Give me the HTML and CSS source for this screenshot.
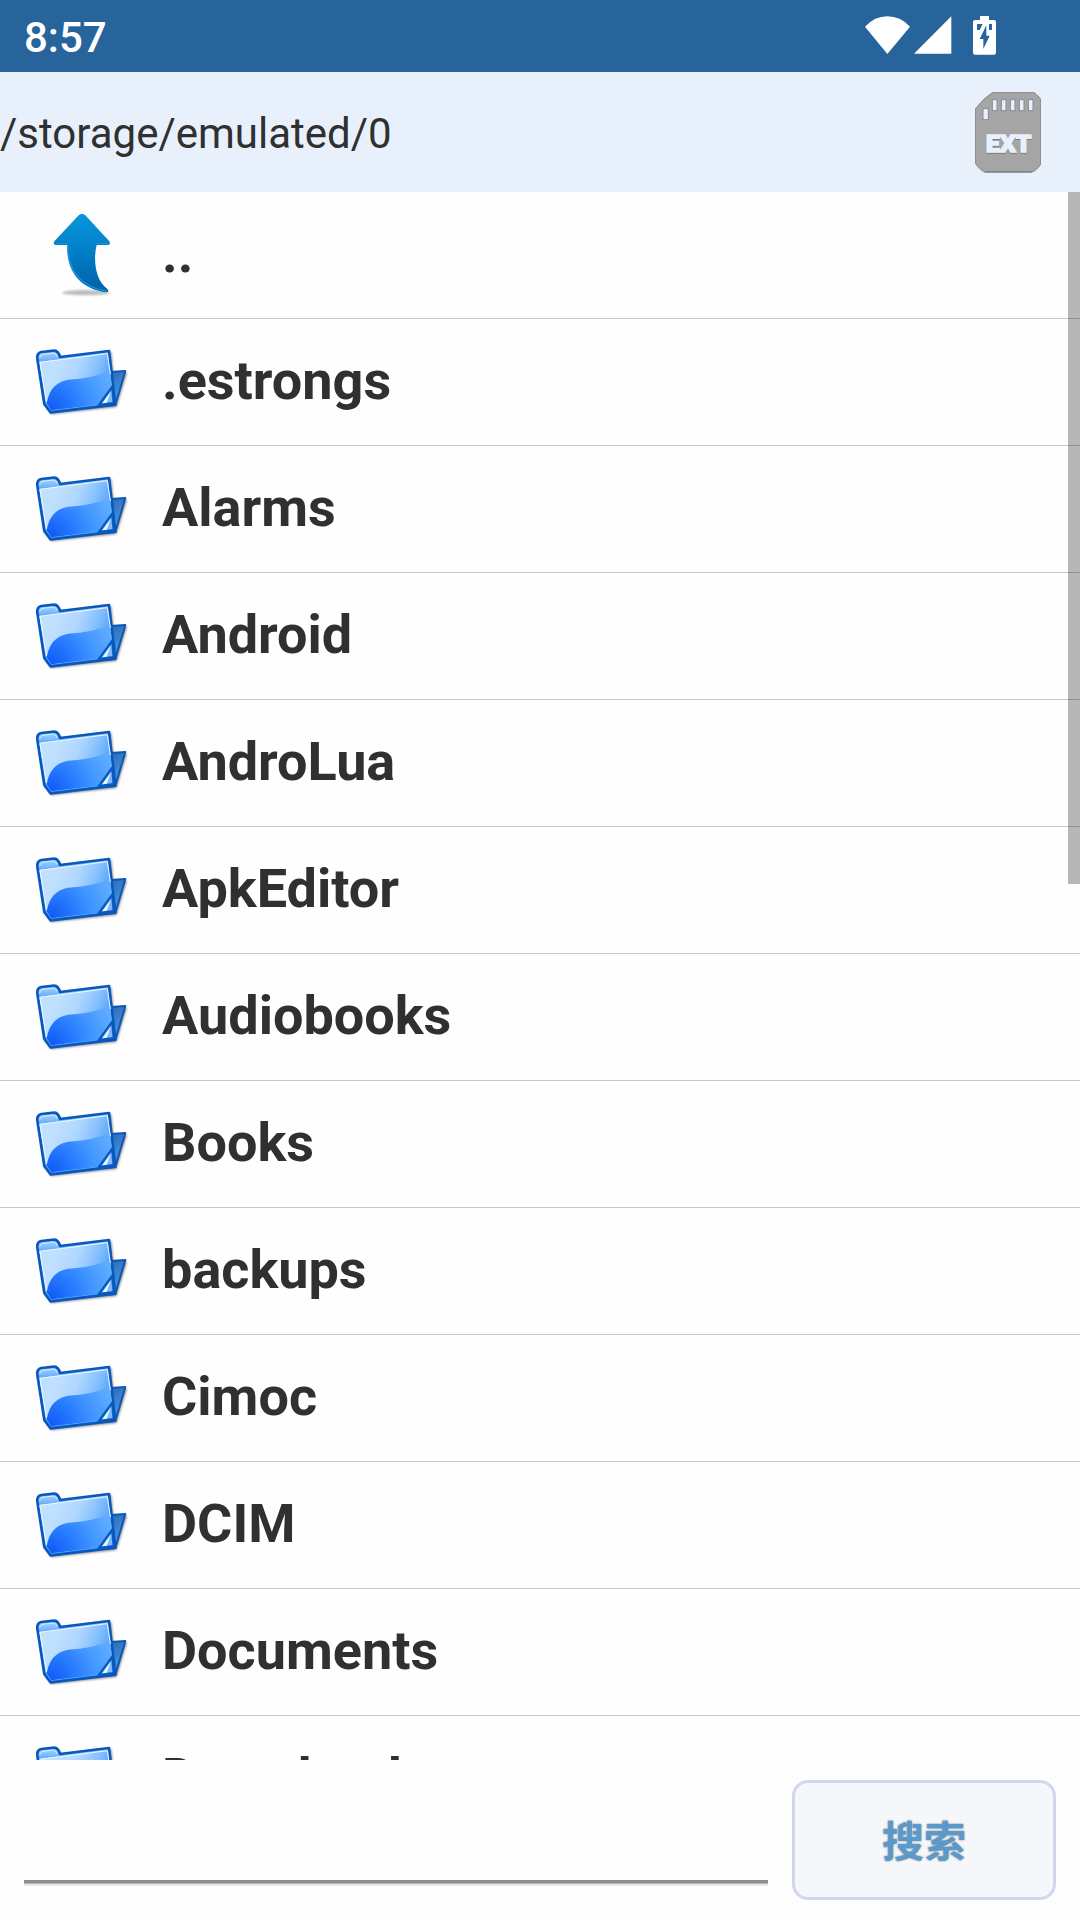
FILE: index.html
```html
<!DOCTYPE html>
<html lang="zh-CN">
<head>
  <meta charset="UTF-8">
  <meta name="viewport" content="width=device-width, initial-scale=1.0">
  <title>/storage/emulated/0</title>
  <link rel="stylesheet" href="styles.css">
</head>
<body>

<!-- shared folder icon -->
<svg class="sprite" aria-hidden="true">
  <defs>
    <linearGradient id="folderShine" gradientUnits="userSpaceOnUse" x1="110" y1="95" x2="262" y2="150">
      <stop offset="0" stop-color="#c0e0ff"/>
      <stop offset="0.4" stop-color="#b0d7ff"/>
      <stop offset="0.75" stop-color="#84bffd"/>
      <stop offset="1" stop-color="#58a5fb"/>
    </linearGradient>
    <radialGradient id="folderWave" gradientUnits="userSpaceOnUse" cx="90" cy="240" r="200">
      <stop offset="0" stop-color="#0d58f5"/>
      <stop offset="0.4" stop-color="#2a7dff"/>
      <stop offset="0.7" stop-color="#4499ff"/>
      <stop offset="1" stop-color="#5fabff"/>
    </radialGradient>
    <linearGradient id="folderBack" x1="0" y1="0" x2="0.6" y2="1">
      <stop offset="0" stop-color="#215fa8"/>
      <stop offset="1" stop-color="#4d9ae8"/>
    </linearGradient>
    <linearGradient id="folderTab" gradientUnits="userSpaceOnUse" x1="0" y1="66" x2="0" y2="100">
      <stop offset="0" stop-color="#a5d0ff"/>
      <stop offset="1" stop-color="#58a6fb"/>
    </linearGradient>
    <filter id="soft" x="-20%" y="-50%" width="140%" height="200%">
      <feGaussianBlur stdDeviation="3"/>
    </filter>
  </defs>
  <symbol id="folder" viewBox="36 12 288 288">
    <path d="M54 90 L74 226 L94 253 L290 231 L321 128 L280 126 L274 66 Z" fill="#6b5a58" opacity="0.7" filter="url(#soft)"/>
    <path d="M262 127 L316 123 L286 225 L238 228 Z" fill="url(#folderBack)" stroke="#0c57b8" stroke-width="6" stroke-linejoin="round"/>
    <path d="M52 86 Q50 69 64 66 L103 62 Q115 63 120 81 L267 63 L286 224 L92 247 L73 222 Z" fill="url(#folderTab)" stroke="#0759bd" stroke-width="8" stroke-linejoin="round"/>
    <path d="M59 84 Q59 75 69 73 L101 69 Q108 70 111 79" fill="none" stroke="#d8ecff" stroke-width="3"/>
    <path d="M58 96 L263 70 L275 168 L235 224 L94 241 L79 219 Z" fill="url(#folderShine)"/>
    <path d="M81 215 Q92 158 145 149 Q215 146 271 122 L275 168 L235 224 L94 241 L79 219 Z" fill="url(#folderWave)"/>
    <path d="M79 216 L60 97 L262 71 L271 132" fill="none" stroke="#eef7ff" stroke-width="3"/>
    <path d="M277 169 L282 220 L236 225 Z" fill="#2475dc" stroke="#0759bd" stroke-width="6" stroke-linejoin="round"/>
    <path d="M274 182 L277 216 L246 220 Z" fill="#7ebaff"/>
    <path d="M273 183 L247 220 L260 218 Z" fill="#f2f9ff"/>
  </symbol>
</svg>

<div class="screen">

  <!-- status bar -->
  <div class="status-bar">
    <span class="clock">8:57</span>
    <div class="status-icons">
      <svg class="wifi" viewBox="75 48 135 114" aria-hidden="true">
        <path d="M75 80 Q104 49 142 49 Q181 49 210 80 L142 162 Z" fill="#fff"/>
      </svg>
      <svg class="signal" viewBox="222 50 114 114" aria-hidden="true">
        <path d="M222 163 L334 51 L334 163 Z" fill="#fff"/>
      </svg>
      <svg class="battery" viewBox="399 45 69 117" aria-hidden="true">
        <path d="M420 45 H447 V57 H462 Q468 57 468 63 V155 Q468 161 462 161 H405 Q399 161 399 155 V63 Q399 57 405 57 H420 Z" fill="#fff"/>
        <path d="M411 69 H428 L419 87 H411 Z M447 69 H456 V87 H447 Z M439 73 V104 H449 L430 144 V114 H419 Z" fill="#27649b"/>
      </svg>
    </div>
  </div>

  <!-- current path -->
  <header class="path-bar">
    <h1 class="path">/storage/emulated/0</h1>
    <button class="card-button" type="button" aria-label="EXT">
      <svg class="card-icon" viewBox="405 275 198 243" aria-hidden="true">
        <path d="M458 276 H578 Q584 276 590 283 L597 290 Q602 294 602 302 V488 Q602 494 596 500 L588 508 Q582 515 574 515 H436 Q430 515 424 509 L412 497 Q406 491 406 486 V326 Q430 294 458 276 Z" fill="#a5a5a5" stroke="#858585" stroke-width="3" stroke-linejoin="round"/>
        <path d="M434 515 H576" stroke="#747474" stroke-width="3"/>
        <g fill="#e8f0fc" stroke="#858b93" stroke-width="3">
          <rect x="457" y="298" width="14" height="33"/>
          <rect x="484" y="298" width="14" height="33"/>
          <rect x="511" y="298" width="14" height="33"/>
          <rect x="538" y="298" width="14" height="33"/>
          <rect x="565" y="298" width="14" height="33"/>
          <rect x="429" y="325" width="16" height="33"/>
        </g>
        <text class="card-label card-label-shadow" x="506" y="458">EXT</text>
        <text class="card-label" x="506" y="455">EXT</text>
      </svg>
    </button>
  </header>

  <!-- file list -->
  <main class="browser">
    <ul class="file-list">
      <li><a class="row" href="#">
        <svg class="icon" viewBox="96 51 288 288" aria-hidden="true">
          <defs>
            <linearGradient id="arrowFill" x1="0" y1="0" x2="0" y2="1">
              <stop offset="0" stop-color="#0a96dc"/>
              <stop offset="0.45" stop-color="#0280c8"/>
              <stop offset="1" stop-color="#0060aa"/>
            </linearGradient>
          </defs>
          <ellipse cx="258" cy="308" rx="72" ry="8" fill="#bdbdbd" filter="url(#soft)"/>
          <path d="M236 76 Q246 67 256 76 L328 154 Q333 163 324 165 H290 C279 210 286 271 322 297 Q329 305 319 307 C255 300 197 255 202 165 H167 Q158 163 163 154 Z" fill="url(#arrowFill)"/>
          <path d="M204 168 C202 249 254 295 319 303" fill="none" stroke="#1697df" stroke-width="4"/>
          <path d="M166 161 H202 M290 161 H326" stroke="#1491d9" stroke-width="3"/>
        </svg>
        <span class="name">..</span></a></li>
      <li><a class="row" href="#"><svg class="icon" aria-hidden="true"><use href="#folder"/></svg><span class="name">.estrongs</span></a></li>
      <li><a class="row" href="#"><svg class="icon" aria-hidden="true"><use href="#folder"/></svg><span class="name">Alarms</span></a></li>
      <li><a class="row" href="#"><svg class="icon" aria-hidden="true"><use href="#folder"/></svg><span class="name">Android</span></a></li>
      <li><a class="row" href="#"><svg class="icon" aria-hidden="true"><use href="#folder"/></svg><span class="name">AndroLua</span></a></li>
      <li><a class="row" href="#"><svg class="icon" aria-hidden="true"><use href="#folder"/></svg><span class="name">ApkEditor</span></a></li>
      <li><a class="row" href="#"><svg class="icon" aria-hidden="true"><use href="#folder"/></svg><span class="name">Audiobooks</span></a></li>
      <li><a class="row" href="#"><svg class="icon" aria-hidden="true"><use href="#folder"/></svg><span class="name">Books</span></a></li>
      <li><a class="row" href="#"><svg class="icon" aria-hidden="true"><use href="#folder"/></svg><span class="name">backups</span></a></li>
      <li><a class="row" href="#"><svg class="icon" aria-hidden="true"><use href="#folder"/></svg><span class="name">Cimoc</span></a></li>
      <li><a class="row" href="#"><svg class="icon" aria-hidden="true"><use href="#folder"/></svg><span class="name">DCIM</span></a></li>
      <li><a class="row" href="#"><svg class="icon" aria-hidden="true"><use href="#folder"/></svg><span class="name">Documents</span></a></li>
      <li><a class="row" href="#"><svg class="icon" aria-hidden="true"><use href="#folder"/></svg><span class="name">Download</span></a></li>
    </ul>
    <div class="scroll-thumb"></div>
  </main>

  <!-- search -->
  <form class="search-bar">
    <input class="search-input" type="text" aria-label="搜索">
    <button class="search-button" type="button">搜索</button>
  </form>

</div>

</body>
</html>
```

FILE: styles.css
```css
* { box-sizing: border-box; }

body {
  margin: 0;
  background: #fefefe;
  color: #303030;
  font-family: Roboto, "Noto Sans CJK SC", sans-serif;
}

button { padding: 0; border: 0; background: none; font-family: inherit; }

.sprite { position: absolute; width: 0; height: 0; }

.screen { display: flex; flex-direction: column; height: 100vh; }

/* status bar */
.status-bar {
  display: flex;
  align-items: center;
  justify-content: space-between;
  height: 72px;
  padding: 2px 84px 0 24px;
  background: #27649b;
  color: #fff;
}
.clock { font-size: 42px; font-weight: 500; }
.status-icons { display: flex; align-items: center; padding-bottom: 4px; }
.wifi { width: 45px; height: 38px; }
.signal { width: 38px; height: 38px; margin: 0 21px 0 4px; }
.battery { width: 23px; height: 39px; }

/* path bar */
.path-bar {
  display: flex;
  align-items: center;
  justify-content: space-between;
  height: 120px;
  padding-right: 24px;
  background: #e8f0fc;
}
.path { margin: 0; padding-top: 3px; font-size: 42px; font-weight: 400; }
.card-button {
  display: flex;
  align-items: center;
  justify-content: center;
  width: 96px;
  height: 96px;
}
.card-icon { width: 66px; height: 81px; }
.card-label {
  font-family: Roboto, sans-serif;
  font-size: 74px;
  font-weight: 900;
  text-anchor: middle;
  fill: #e8f0fc;
  stroke: #e8f0fc;
  stroke-width: 5px;
}
.card-label-shadow { fill: #7d7d7d; stroke: #7d7d7d; }

/* file list */
.browser { position: relative; flex: 1; min-height: 0; }
.file-list {
  height: 100%;
  margin: 0;
  padding: 0;
  list-style: none;
  overflow-y: auto;
  scrollbar-width: none;
}
.row {
  display: flex;
  align-items: center;
  gap: 34px;
  height: 127px;
  padding: 0 32px;
  border-bottom: 1px solid #c8c8c0;
  color: inherit;
  font-size: 54px;
  font-weight: 700;
  text-decoration: none;
}
.name { padding-bottom: 3px; }
.icon { flex: none; width: 96px; height: 96px; }
.scroll-thumb {
  position: absolute;
  top: 0;
  right: 0;
  width: 12px;
  height: 692px;
  background: rgba(0, 0, 0, 0.28);
}

/* search */
.search-bar {
  display: flex;
  align-items: center;
  gap: 24px;
  height: 160px;
  padding: 0 24px;
}
.search-input {
  flex: 1;
  min-width: 0;
  height: 86px;
  padding: 0 12px;
  border: 0;
  border-bottom: 3px solid #8c8c8c;
  box-shadow: 0 1px 0 #b4b4b4, 0 3px 0 #e8e8e8;
  outline: 0;
  background: transparent;
  color: inherit;
  font-family: inherit;
  font-size: 54px;
}
.search-button {
  width: 264px;
  height: 120px;
  padding-bottom: 4px;
  border: 3px solid #d1d7ea;
  border-radius: 16px;
  background: #f5f7fb;
  color: #5a9aca;
  font-size: 42px;
  font-weight: 700;
  text-shadow: 0 0 2px #777;
}
```
